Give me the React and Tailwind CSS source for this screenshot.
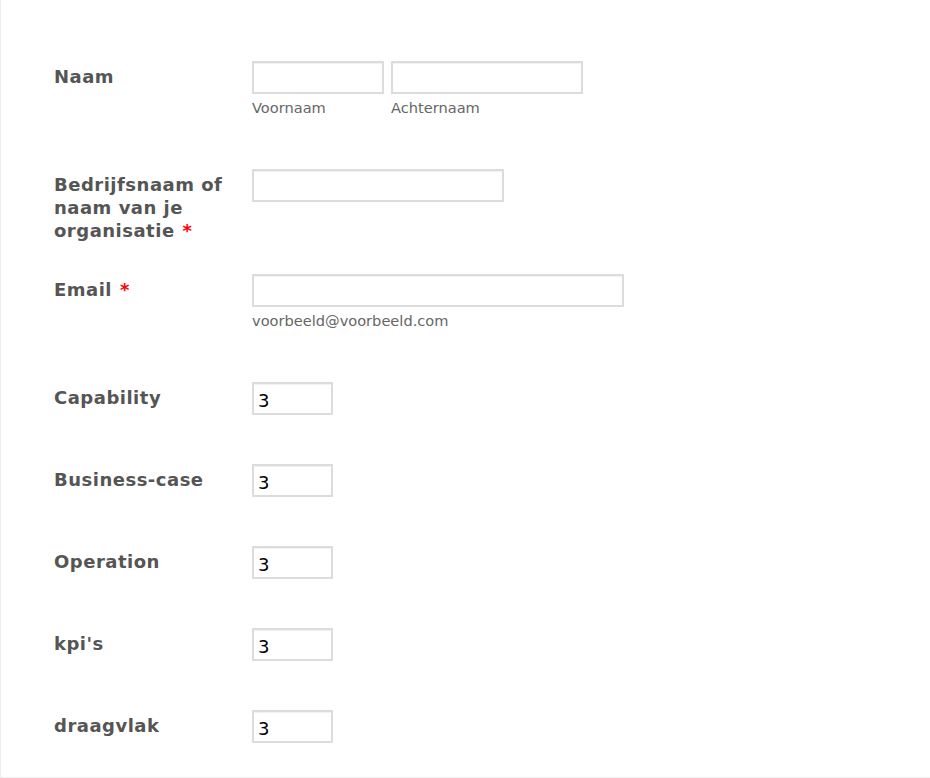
export default function App() {
  const inputCls =
    "h-[33px] border-2 border-[#dcdcdc] bg-white shadow-[inset_0_1px_1px_rgba(0,0,0,0.06)] outline-none px-[4px] pt-[3px] text-[18px] text-black";
  const labelCls =
    "w-[198px] shrink-0 mt-[4px] pb-[8px] text-[18px] leading-[23px] font-bold tracking-[0.5px] text-[#555555]";
  const sub = "h-[26px] pt-[5px] text-[14.6px] leading-[18px] text-[#666666]";
  const star = <span className="text-[#ff0000] ml-[8px]">*</span>;
  const numbers = ["Capability", "Business-case", "Operation", "kpi's", "draagvlak"];
  return (
    <div className="w-[930px] h-[778px] bg-white" style={{ fontFamily: '"DejaVu Sans", Verdana, sans-serif' }}>
      <div className="h-[778px] border-l border-b border-[#eeeeee] pl-[53px] pt-[37px]">
        {/* Naam */}
        <div className="flex pt-[24px]">
          <div className={labelCls}>Naam</div>
          <div className="flex gap-[7px] pb-[25px]">
            <div className="flex flex-col">
              <input className={inputCls + " w-[132px]"} />
              <div className={sub}>Voornaam</div>
            </div>
            <div className="flex flex-col">
              <input className={inputCls + " w-[192px]"} />
              <div className={sub}>Achternaam</div>
            </div>
          </div>
        </div>
        {/* Bedrijfsnaam */}
        <div className="flex pt-[24px]">
          <div className={labelCls}>
            Bedrijfsnaam of naam van je organisatie{star}
          </div>
          <div className="pb-[25px]">
            <input className={inputCls + " w-[252px]"} />
          </div>
        </div>
        {/* Email */}
        <div className="flex pt-[24px]">
          <div className={labelCls}>Email{star}</div>
          <div className="flex flex-col pb-[25px]">
            <input className={inputCls + " w-[372px]"} />
            <div className={sub}>voorbeeld@voorbeeld.com</div>
          </div>
        </div>
        {numbers.map((n) => (
          <div key={n} className="flex pt-[24px]">
            <div className={labelCls}>{n}</div>
            <div className="pb-[25px]">
              <input className={inputCls + " w-[81px]"} defaultValue="3" />
            </div>
          </div>
        ))}
      </div>
    </div>
  );
}
